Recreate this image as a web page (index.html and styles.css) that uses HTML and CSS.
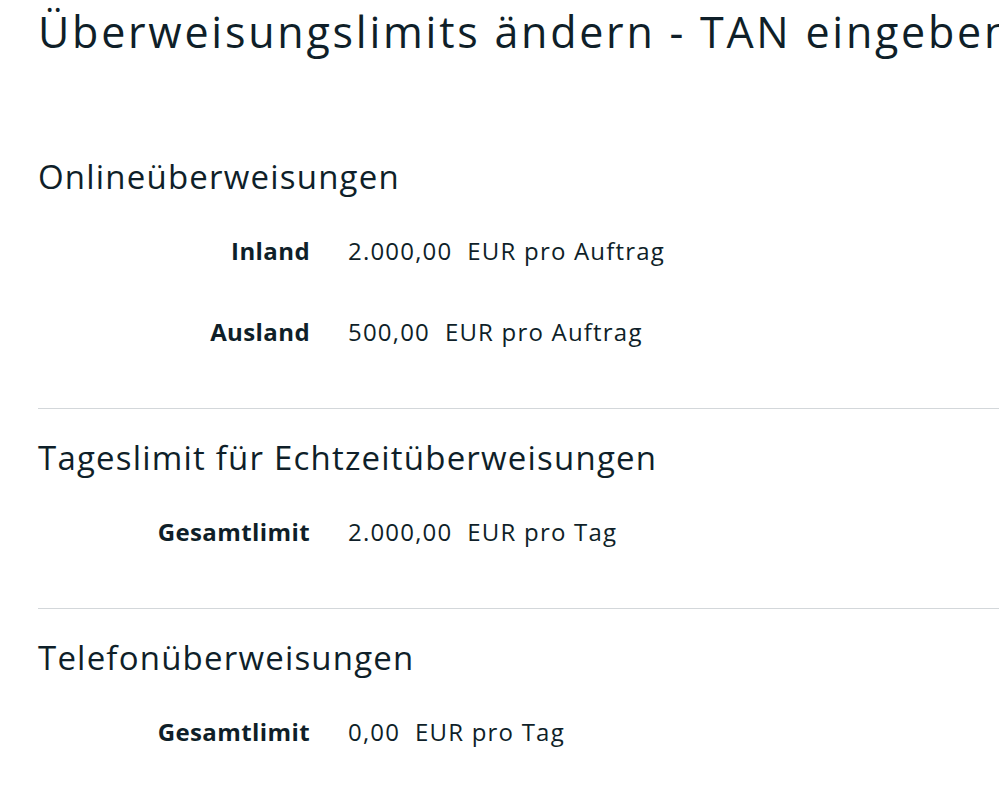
FILE: index.html
```html
<!DOCTYPE html>
<html lang="de">
<head>
<meta charset="utf-8">
<title>Überweisungslimits ändern - TAN eingeben</title>
<link rel="stylesheet" href="styles.css">
</head>
<body>
<main class="page">
  <h1 class="title">Überweisungslimits ändern - TAN eingeben</h1>

  <section class="section">
    <h2 class="section-title">Onlineüberweisungen</h2>
    <div class="rows">
      <div class="row"><span class="label">Inland</span><span class="value">2.000,00&nbsp; EUR pro Auftrag</span></div>
      <div class="row"><span class="label">Ausland</span><span class="value">500,00&nbsp; EUR pro Auftrag</span></div>
    </div>
  </section>

  <section class="section">
    <h2 class="section-title">Tageslimit für Echtzeitüberweisungen</h2>
    <div class="rows">
      <div class="row"><span class="label">Gesamtlimit</span><span class="value">2.000,00&nbsp; EUR pro Tag</span></div>
    </div>
  </section>

  <section class="section section-last">
    <h2 class="section-title">Telefonüberweisungen</h2>
    <div class="rows">
      <div class="row"><span class="label">Gesamtlimit</span><span class="value">0,00&nbsp; EUR pro Tag</span></div>
    </div>
  </section>
</main>
</body>
</html>
```

FILE: styles.css
```css
html, body {
  margin: 0;
  padding: 0;
  background: #ffffff;
  overflow: hidden;
}

body {
  font-family: "Open Sans", Lato, sans-serif;
  color: #0f1f29;
}

.page {
  padding-left: 38px;
  width: 1100px;
}

.title {
  margin: 8px 0 0;
  font-size: 43px;
  line-height: 48px;
  font-weight: 400;
  letter-spacing: 2.75px;
  white-space: nowrap;
}

.section {
  padding: 29px 0 61px;
  border-bottom: 1px solid #d3d7da;
}

.section:first-of-type {
  margin-top: 72px;
}

.section-last {
  border-bottom: none;
}

.section-title {
  margin: 0;
  font-size: 33px;
  line-height: 40px;
  font-weight: 400;
  letter-spacing: 1.2px;
  white-space: nowrap;
}

.rows {
  margin-top: 39px;
  display: flex;
  flex-direction: column;
  gap: 51px;
}

.row {
  display: flex;
  align-items: center;
  gap: 38px;
  font-size: 24px;
  line-height: 30px;
}

.label {
  width: 272px;
  text-align: right;
  font-weight: 700;
  letter-spacing: 0.4px;
}

.value {
  white-space: nowrap;
  letter-spacing: 1.2px;
}
```
